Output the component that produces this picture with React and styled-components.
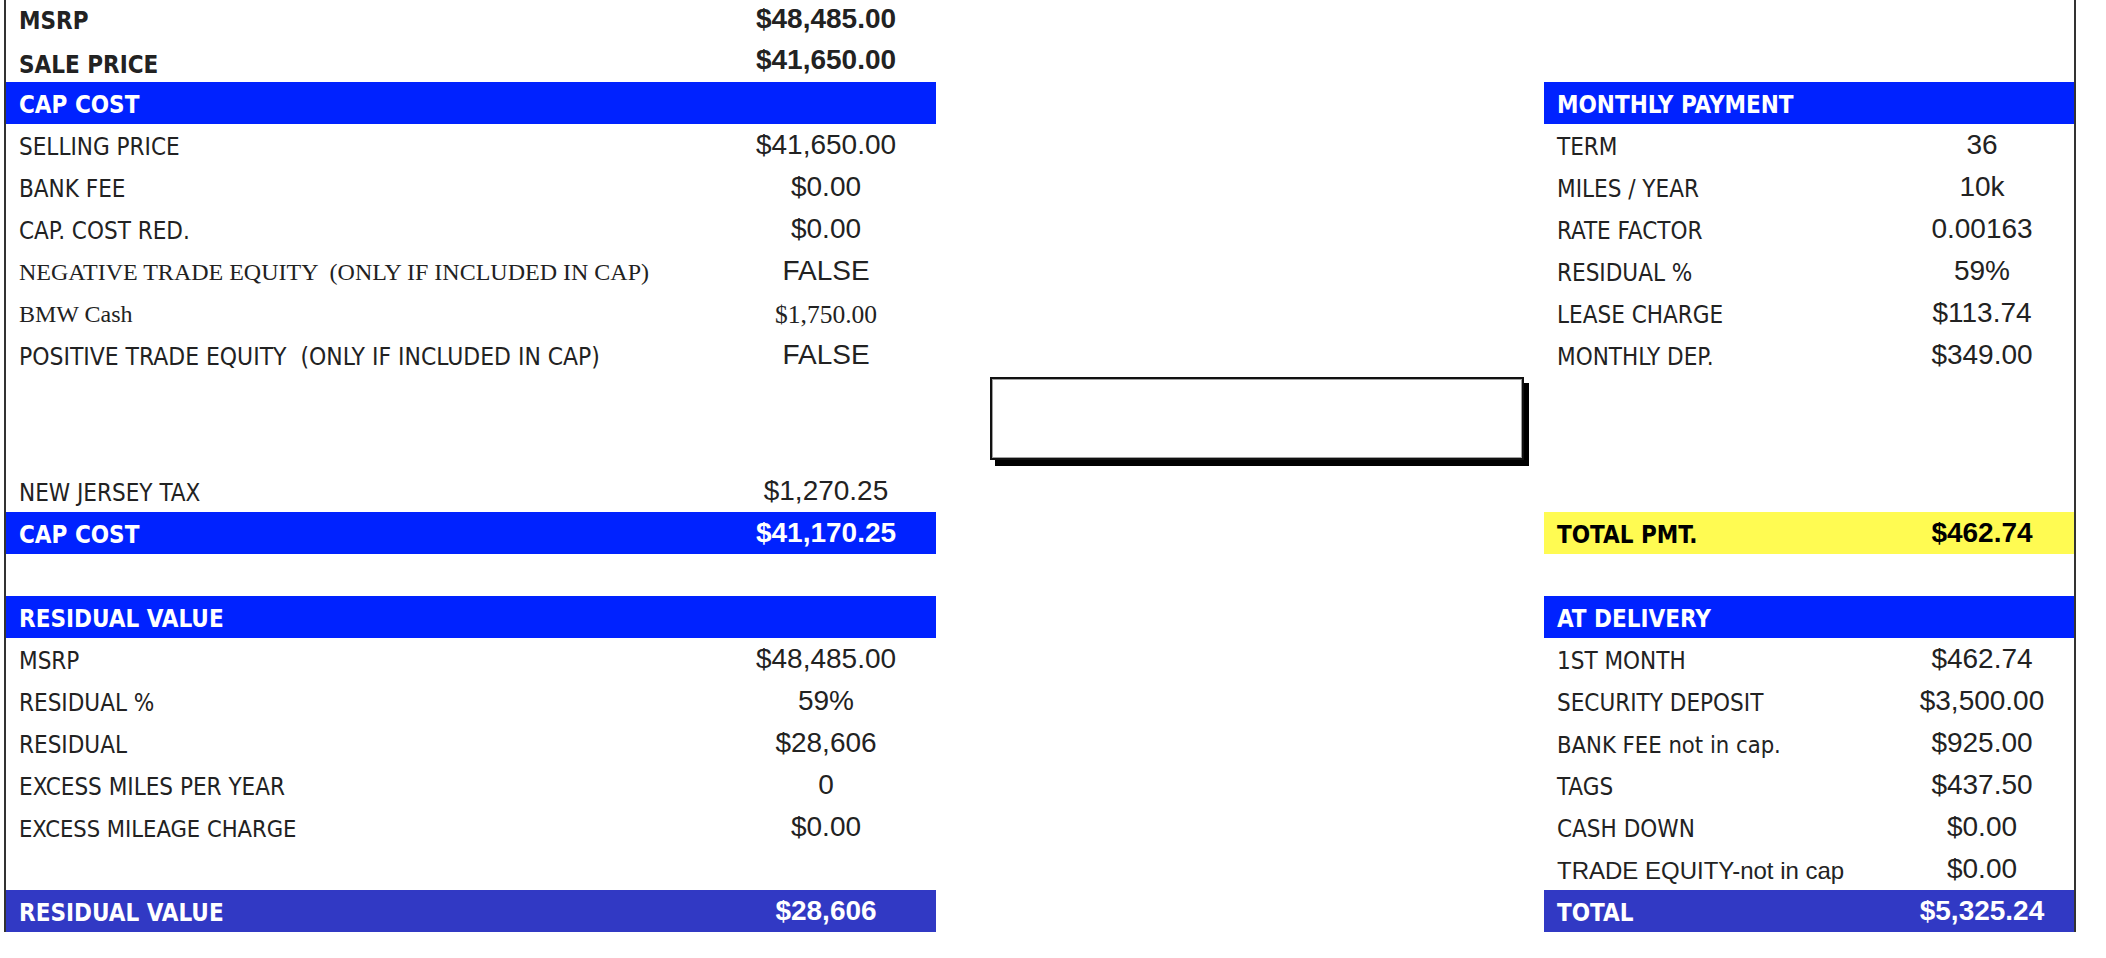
import React from "react";
import styled, { createGlobalStyle, css } from "styled-components";

const GlobalStyle = createGlobalStyle`
  html, body { margin: 0; padding: 0; background: #ffffff; }
  body { font-family: "DejaVu Sans Condensed", "DejaVu Sans", sans-serif; }
`;

const fonts = {
  tahoma: `"DejaVu Sans Condensed", "DejaVu Sans", sans-serif`,
  helv: `"Liberation Sans", Arial, sans-serif`,
  times: `"Liberation Serif", "Times New Roman", serif`,
};

const tones = {
  blue: { bg: "#0022ff", fg: "#ffffff" },
  navy: { bg: "#3139c4", fg: "#ffffff" },
  yellow: { bg: "#fffb52", fg: "#000000" },
};

const Sheet = styled.div`
  display: grid;
  grid-template-columns: 930px 608px 530px;
  width: max-content;
  margin-left: 4px;
  border-left: 2px solid #333;
  border-right: 2px solid #333;
`;

const Panel = styled.section`
  display: flex;
  flex-direction: column;
  --value-w: ${(p) => p.$valueWidth}px;
`;

const Gap = styled.div`
  height: ${(p) => p.$h}px;
`;

const Row = styled.div`
  display: grid;
  grid-template-columns: 1fr var(--value-w);
  align-items: center;
  height: ${(p) => p.$h || 42}px;
  padding-left: 13px;
`;

const Label = styled.span`
  font-family: ${(p) => fonts[p.$font || "tahoma"]};
  font-stretch: ${(p) => (p.$font && p.$font !== "tahoma" ? "normal" : "condensed")};
  font-size: ${(p) => p.$size || 24}px;
  font-weight: ${(p) => (p.$bold ? 700 : 400)};
  color: #222;
  white-space: pre;
  padding-top: ${(p) => p.$drop ?? 3}px;
`;

const Value = styled.span`
  font-family: ${(p) => fonts[p.$font || "helv"]};
  font-size: ${(p) => p.$size || 28}px;
  font-weight: ${(p) => (p.$bold ? 700 : 400)};
  color: #222;
  text-align: center;
  white-space: nowrap;
  padding-top: ${(p) => (p.$font === "times" ? 3 : 0)}px;
  padding-bottom: ${(p) => (p.$bold ? 3 : 0)}px;
`;

const Bar = styled.div`
  display: grid;
  grid-template-columns: 1fr var(--value-w);
  align-items: center;
  height: 42px;
  padding-left: 13px;
  ${(p) => css`
    background: ${tones[p.$tone].bg};
    color: ${tones[p.$tone].fg};
  `}
`;

const BarLabel = styled.span`
  font-family: ${fonts.tahoma};
  font-stretch: condensed;
  font-size: 24px;
  font-weight: 700;
  padding-top: 4px;
`;

const BarValue = styled.span`
  font-family: ${fonts.helv};
  font-size: 28px;
  font-weight: 700;
  text-align: center;
`;

const Middle = styled.div`
  padding-top: 377px;
  padding-left: 54px;
`;

const NoteBox = styled.div`
  box-sizing: border-box;
  width: 534px;
  height: 83px;
  background: #ffffff;
  border: 2px solid #111;
  box-shadow: inset 0 0 0 1px #a0a0a0, 5px 6px 0 #000;
`;

const capCostRows = [
  { label: "SELLING PRICE", value: "$41,650.00" },
  { label: "BANK FEE", value: "$0.00" },
  { label: "CAP. COST RED.", value: "$0.00" },
  { label: "NEGATIVE TRADE EQUITY  (ONLY IF INCLUDED IN CAP)", value: "FALSE", labelFont: "times", labelSize: 24 },
  { label: "BMW Cash", value: "$1,750.00", labelFont: "times", labelSize: 24, valueFont: "times", valueSize: 25.5 },
  { label: "POSITIVE TRADE EQUITY  (ONLY IF INCLUDED IN CAP)", value: "FALSE", labelSize: 24.4 },
];

const residualRows = [
  { label: "MSRP", value: "$48,485.00" },
  { label: "RESIDUAL %", value: "59%" },
  { label: "RESIDUAL", value: "$28,606" },
  { label: "EXCESS MILES PER YEAR", value: "0" },
  { label: "EXCESS MILEAGE CHARGE", value: "$0.00", labelSize: 23.5 },
];

const paymentRows = [
  { label: "TERM", value: "36" },
  { label: "MILES / YEAR", value: "10k" },
  { label: "RATE FACTOR", value: "0.00163" },
  { label: "RESIDUAL %", value: "59%" },
  { label: "LEASE CHARGE", value: "$113.74" },
  { label: "MONTHLY DEP.", value: "$349.00" },
];

const deliveryRows = [
  { label: "1ST MONTH", value: "$462.74" },
  { label: "SECURITY DEPOSIT", value: "$3,500.00" },
  { label: "BANK FEE not in cap.", value: "$925.00", labelSize: 23.6 },
  { label: "TAGS", value: "$437.50" },
  { label: "CASH DOWN", value: "$0.00" },
  { label: "TRADE EQUITY-not in cap", value: "$0.00", labelFont: "helv", labelSize: 24 },
];

function DataRow({ row }) {
  return (
    <Row>
      <Label $font={row.labelFont} $size={row.labelSize}>{row.label}</Label>
      <Value $font={row.valueFont} $size={row.valueSize}>{row.value}</Value>
    </Row>
  );
}

function SectionBar({ tone = "blue", label, value }) {
  return (
    <Bar $tone={tone}>
      <BarLabel>{label}</BarLabel>
      <BarValue>{value}</BarValue>
    </Bar>
  );
}

export default function App() {
  return (
    <>
      <GlobalStyle />
      <Sheet>
        <Panel $valueWidth={220}>
          <Row $h={40}>
            <Label $bold $drop={2}>MSRP</Label>
            <Value $bold>$48,485.00</Value>
          </Row>
          <Row $h={42}>
            <Label $bold $drop={8}>SALE PRICE</Label>
            <Value $bold>$41,650.00</Value>
          </Row>
          <SectionBar label="CAP COST" />
          {capCostRows.map((r) => (
            <DataRow key={r.label} row={r} />
          ))}
          <Gap $h={94} />
          <DataRow row={{ label: "NEW JERSEY TAX", value: "$1,270.25" }} />
          <SectionBar label="CAP COST" value="$41,170.25" />
          <Gap $h={42} />
          <SectionBar label="RESIDUAL VALUE" />
          {residualRows.map((r) => (
            <DataRow key={r.label} row={r} />
          ))}
          <Gap $h={42} />
          <SectionBar tone="navy" label="RESIDUAL VALUE" value="$28,606" />
        </Panel>

        <Middle>
          <NoteBox />
        </Middle>

        <Panel $valueWidth={184}>
          <Gap $h={82} />
          <SectionBar label="MONTHLY PAYMENT" />
          {paymentRows.map((r) => (
            <DataRow key={r.label} row={r} />
          ))}
          <Gap $h={136} />
          <SectionBar tone="yellow" label="TOTAL PMT." value="$462.74" />
          <Gap $h={42} />
          <SectionBar label="AT DELIVERY" />
          {deliveryRows.map((r) => (
            <DataRow key={r.label} row={r} />
          ))}
          <SectionBar tone="navy" label="TOTAL" value="$5,325.24" />
        </Panel>
      </Sheet>
    </>
  );
}
